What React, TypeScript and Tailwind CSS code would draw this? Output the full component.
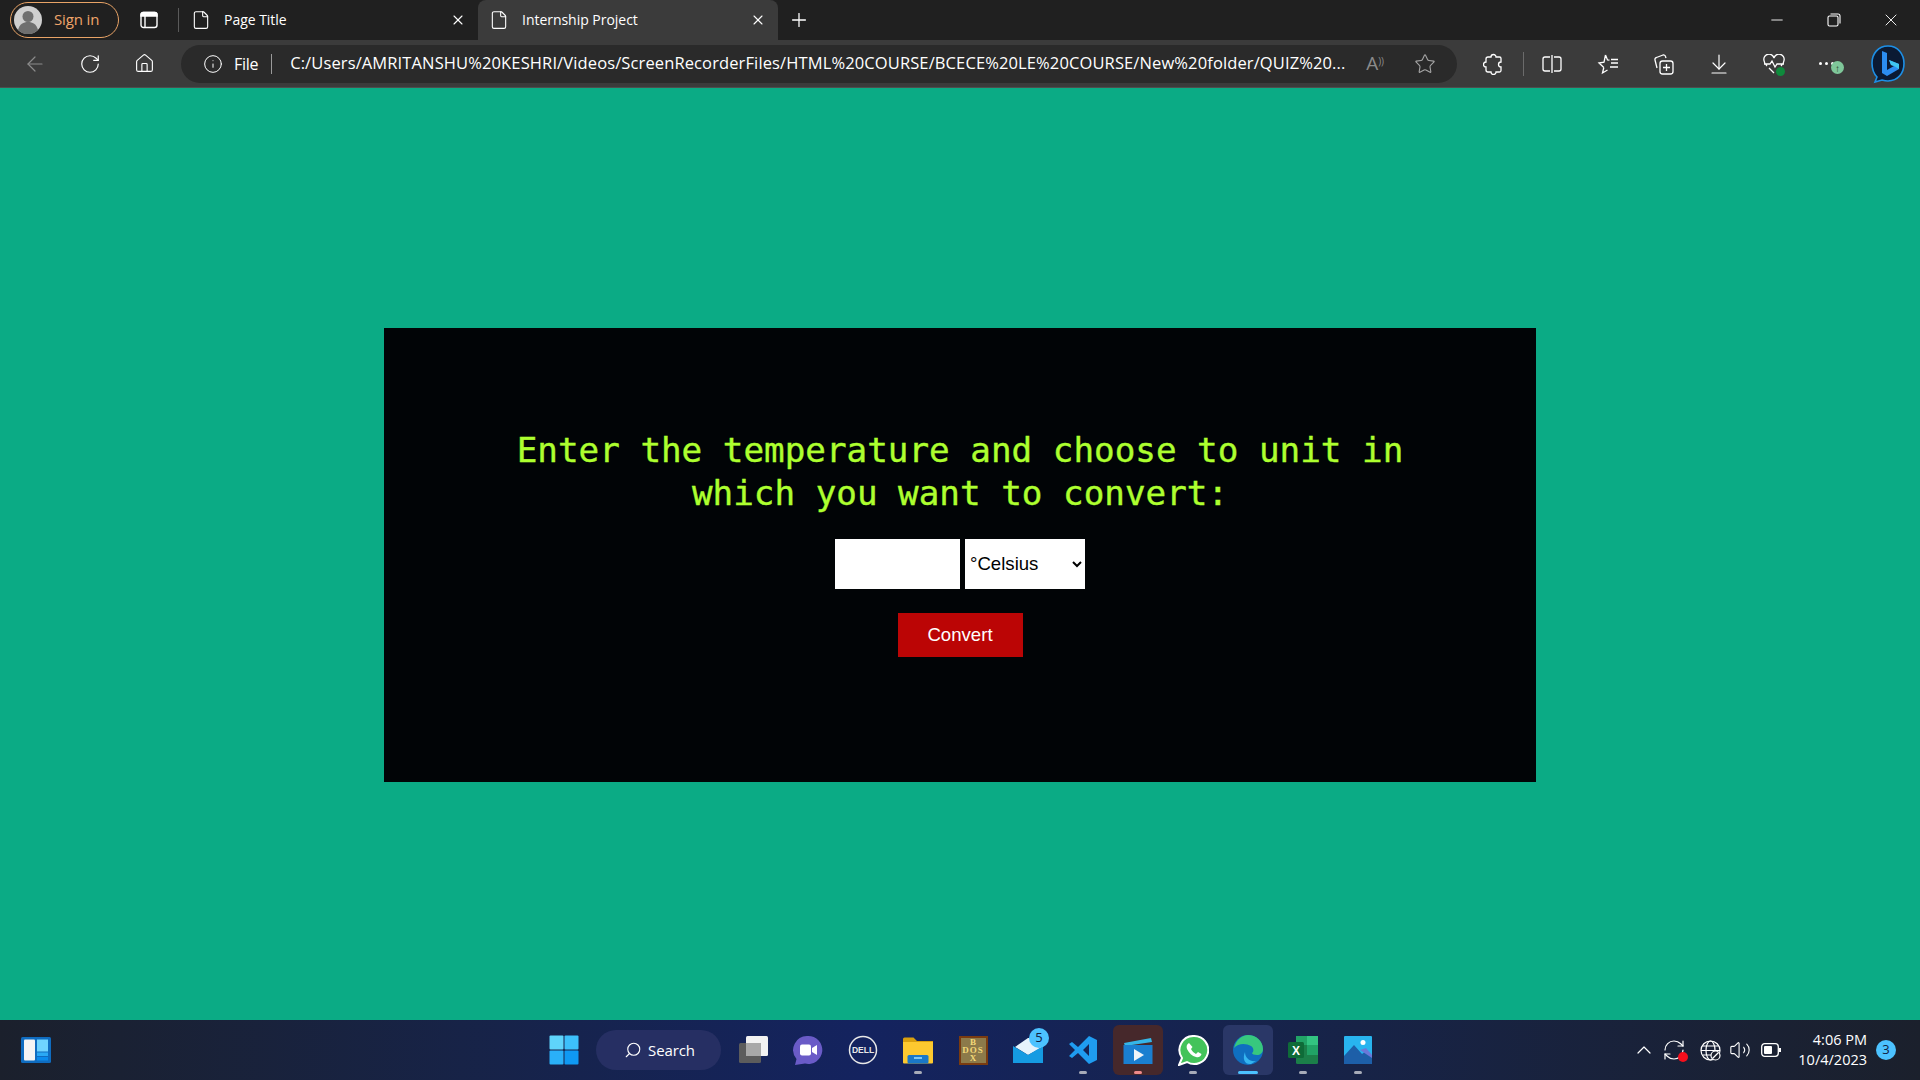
import type { ReactNode } from 'react'
import {
  ArrowDownToLine, ArrowLeft, ChevronUp, File, Home, Info, Minus, Plus, RefreshCw, RotateCw, Search, Star, Volume2, X,
} from 'lucide-react'

const UI_FONT = { fontFamily: '"Open Sans", "Noto Sans", sans-serif' }

function Slot({ w, children, className = '' }: { w: string; children: ReactNode; className?: string }) {
  return <div className={`${w} flex shrink-0 items-center justify-center ${className}`}>{children}</div>
}

function Tab({ title, active }: { title: string; active?: boolean }) {
  return (
    <div className={`flex h-10 items-center pr-[12px] ${active ? 'w-[300px] rounded-t-lg bg-[#3b3b3b] pl-[11px]' : 'w-[297px] pl-[10px]'}`}>
      <File size={20} strokeWidth={1.3} className="text-white" />
      <span className="ml-[13px] flex-1 pb-[2px] text-[14px] tracking-[-0.03px] text-white">{title}</span>
      <X size={16} strokeWidth={1.6} className="text-white" />
    </div>
  )
}

function Tray({ children, dot, active, tint }: { children: ReactNode; dot?: string; active?: boolean; tint?: string }) {
  return (
    <div className={`relative flex h-[50px] w-[50px] shrink-0 items-center justify-center rounded-md ${active ? 'bg-[#2a3767]' : ''} ${tint ?? ''}`}>
      {children}
      {dot && <span className={`absolute bottom-[1px] left-1/2 h-[3px] -translate-x-1/2 rounded-full ${dot}`} />}
    </div>
  )
}

function Avatar() {
  return (
    <svg width="28" height="28" viewBox="0 0 28 28">
      <circle cx="14" cy="14" r="14" fill="#cfcfcf" />
      <circle cx="14" cy="10.5" r="5.5" fill="#6f6f6f" />
      <path d="M4 24c1.5-6 5.500-8 10-8s8.500 2 10 8a14 14 0 0 1-20 0z" fill="#6f6f6f" />
    </svg>
  )
}

function BingLogo() {
  return (
    <svg width="36" height="40" viewBox="0 0 36 40" fill="none">
      <path d="M18 2C8 2 2 10 2 19c0 6 2 11 5 14l-2 5 7-2c2 .6 4 1 6 1 10 0 16-8 16-17.500S28 2 18 2z" fill="#0b1a33" stroke="#1d8fe6" strokeWidth="1.600" />
      <path d="M12 7l5 2v17l7-4-3-1-2-5 10 4v5l-12 7-5-3z" fill="#2c8df0" />
      <path d="M19 16l10 4v5l-5-3-3-1z" fill="#3fc6f0" />
    </svg>
  )
}

export default function App() {
  return (
    <div className="flex h-[1080px] w-[1920px] flex-col overflow-hidden bg-[#0bab85]" style={UI_FONT}>
      {/* tab strip */}
      <div className="flex h-10 shrink-0 items-center bg-[#202020]">
        <div className="ml-[10px] flex h-[36px] w-[109px] items-center rounded-full border border-[#e8a366] pl-[3px]">
          <Avatar />
          <span className="ml-[12px] pb-[2px] text-[15px] tracking-[-0.15px] text-[#f0a56a]">Sign in</span>
        </div>
        <svg className="ml-[21px]" width="18" height="18" viewBox="0 0 18 18" fill="none" stroke="white" strokeWidth="1.400">
          <rect x="1" y="1.500" width="16" height="15" rx="2.500" />
          <path d="M1 5h16v-1.500a2 2 0 0 0-2-2H3a2 2 0 0 0-2 2z" fill="white" />
          <path d="M5 5v11" />
        </svg>
        <div className="ml-[20px] mr-[2px] h-[24px] w-px bg-[#5a5a5a]" />
        <Tab title="Page Title" />
        <Tab title="Internship Project" active />
        <Plus size={22} strokeWidth={1.4} className="ml-[10px] text-white" />
        <div className="ml-auto mr-[1px] flex items-center">
          <Slot w="w-[57px]"><Minus size={18} strokeWidth={1.2} className="text-white" /></Slot>
          <Slot w="w-[57px]">
            <svg width="14" height="14" viewBox="0 0 14 14" fill="none" stroke="white" strokeWidth="1.100">
              <rect x="1" y="3" width="10" height="10" rx="1.500" />
              <path d="M3.500 1h7.500a2 2 0 0 1 2 2v7.500" />
            </svg>
          </Slot>
          <Slot w="w-[57px]"><X size={20} strokeWidth={1.1} className="text-white" /></Slot>
        </div>
      </div>

      {/* toolbar */}
      <div className="flex h-12 shrink-0 items-center border-b border-[#4e4e4e] bg-[#3b3b3b] pl-[7px] text-white">
        <Slot w="w-[55px]"><ArrowLeft size={24} strokeWidth={1.2} className="text-[#8b8b8b]" /></Slot>
        <Slot w="w-[55px]"><RotateCw size={22} strokeWidth={1.3} /></Slot>
        <Slot w="w-[55px]"><Home size={21} strokeWidth={1.3} /></Slot>
        <div className="ml-[9px] flex h-[38px] w-[1276px] items-center rounded-full bg-[#2a2a2a] pl-[22px]">
          <Info size={20} strokeWidth={1.200} />
          <span className="ml-[11px] text-[16px] tracking-[-0.3px]">File</span>
          <div className="ml-[13px] mr-[18px] h-[20px] w-px bg-[#9a9a9a]" />
          <span className="w-[1072px] shrink-0 truncate text-[16.5px] tracking-[0.12px]">
            C:/Users/AMRITANSHU%20KESHRI/Videos/ScreenRecorderFiles/HTML%20COURSE/BCECE%20LE%20COURSE/New%20folder/QUIZ%20...
          </span>
          <span className="ml-[4px] text-[19px] leading-none text-[#8b8b8b]">A<sup className="text-[10px]">))</sup></span>
          <Star size={22} strokeWidth={1.200} className="ml-[30px] shrink-0 text-[#a5a5a5]" />
        </div>
        <Slot w="w-[66px]" className="pl-[6px]">
          <svg width="20" height="22" viewBox="0 0 20 22" fill="none" stroke="white" strokeWidth="1.300">
            <path d="M8 4a2.500 2.500 0 0 1 5 0h3.500a1.500 1.500 0 0 1 1.500 1.500V9a2.500 2.500 0 0 0 0 5v3.500a1.500 1.500 0 0 1-1.500 1.500H13a2.500 2.500 0 0 1-5 0H5a2 2 0 0 1-2-2v-3a2.500 2.500 0 0 1 0-5V6a2 2 0 0 1 2-2z" />
          </svg>
        </Slot>
        <div className="h-[24px] w-px bg-[#6b6b6b]" />
        <Slot w="w-[56px]">
          <svg width="20" height="20" viewBox="0 0 20 20" fill="none" stroke="white" strokeWidth="1.300">
            <path d="M8 3H3a2 2 0 0 0-2 2v10a2 2 0 0 0 2 2h5M12 3h5a2 2 0 0 1 2 2v10a2 2 0 0 1-2 2h-5M10 1v18" />
          </svg>
        </Slot>
        <Slot w="w-[56px]">
          <svg width="22" height="22" viewBox="0 0 22 22" fill="none" stroke="white" strokeWidth="1.300">
            <path d="M8.500 2l2 5 2 .2M6.800 14.500L5.500 20l5-3M6.800 14.500L2 10l5-.8L8.500 2M14 10h7M13 14h8M14 6.500h7" />
          </svg>
        </Slot>
        <Slot w="w-[55px]">
          <svg width="22" height="22" viewBox="0 0 22 22" fill="none" stroke="white" strokeWidth="1.300">
            <path d="M4 15l-2-8a2 2 0 0 1 1.500-2.500L10 2a2 2 0 0 1 2.500 1.500L13 5" />
            <rect x="7" y="8" width="13" height="13" rx="2.500" />
            <path d="M13.500 11v7M10 14.500h7" />
          </svg>
        </Slot>
        <Slot w="w-[55px]"><ArrowDownToLine size={24} strokeWidth={1.200} /></Slot>
        <Slot w="w-[56px]">
          <span className="relative flex">
            <svg width="22" height="20" viewBox="0 0 22 20" fill="none" stroke="white" strokeWidth="1.300">
              <path d="M4 12C2 10 1 8.500 1 6.500A5 5 0 0 1 11 4a5 5 0 0 1 10 2.500c0 2-1 3.500-3 5.500M1 10h6l2-3 3 6 2-3h7M6 14l5 5" />
            </svg>
            <span className="absolute -bottom-[2px] right-0 h-[9px] w-[9px] rounded-full bg-[#0f8a3c]" />
          </span>
        </Slot>
        <Slot w="w-[56px]">
          <span className="relative flex w-[22px] justify-start gap-[3px]">
            <span className="h-[3px] w-[3px] rounded-full bg-white" />
            <span className="h-[3px] w-[3px] rounded-full bg-white" />
            <span className="h-[3px] w-[3px] rounded-full bg-white" />
            <span className="absolute -right-[3px] -top-[1px] flex h-[13px] w-[13px] items-center justify-center rounded-full bg-[#7fc79a] text-[10px] font-bold leading-none text-[#1c3b27]">↑</span>
          </span>
        </Slot>
        <Slot w="w-[60px]"><BingLogo /></Slot>
      </div>

      {/* page */}
      <div className="flex flex-1 items-center justify-center pt-[2px]">
        <div className="flex h-[454px] w-[1152px] flex-col items-center bg-[#010406] pt-[101px]">
          <h1
            className="w-[900px] text-center text-[34.26px] font-normal leading-[43px] text-[#adff2f] [-webkit-text-stroke:0.4px_#adff2f]"
            style={{ fontFamily: '"DejaVu Sans Mono", monospace' }}
          >
            Enter the temperature and choose to unit in which you want to convert:
          </h1>
          <div className="mt-[24px] flex gap-[5px]" style={{ fontFamily: '"Liberation Sans", sans-serif' }}>
            <input className="h-[50px] w-[125px] bg-white text-[18.6px] text-black outline-none" />
            <select defaultValue="c" className="h-[50px] w-[120px] bg-white pb-[2px] pl-[1px] text-[18.6px] text-black outline-none">
              <option value="c">°Celsius</option>
              <option value="f">°Fahrenheit</option>
              <option value="k">°Kelvin</option>
            </select>
          </div>
          <button
            className="mt-[24px] h-[44px] w-[125px] bg-[#bb0505] text-[18.6px] text-white"
            style={{ fontFamily: '"Liberation Sans", sans-serif' }}
          >
            Convert
          </button>
        </div>
      </div>

      {/* taskbar */}
      <div className="flex h-[60px] shrink-0 items-center bg-gradient-to-r from-[#1b202c] via-[#14235f] via-45% to-[#1b202c] pl-[21px] pr-[24px]">
        <svg width="30" height="26" viewBox="0 0 30 26">
          <rect width="30" height="26" rx="1.500" fill="#0f6cc0" />
          <rect x="3" y="2.500" width="11" height="21" rx="1" fill="#f4f4f4" />
          <rect x="16" y="2.500" width="11" height="12" fill="#6fd3ff" />
          <rect x="16" y="15.500" width="11" height="3.500" fill="#2aa9f5" />
          <rect x="16" y="20" width="11" height="3.500" fill="#0a8aec" />
        </svg>

        <div className="ml-[498px] flex items-center">
          <svg width="30" height="30" viewBox="0 0 30 30">
            <rect x="0.500" y="0.500" width="14" height="14" rx="1" fill="#5fd4fb" />
            <rect x="15.500" y="0.500" width="14" height="14" rx="1" fill="#3dc0fb" />
            <rect x="0.500" y="15.500" width="14" height="14" rx="1" fill="#2ab0f8" />
            <rect x="15.500" y="15.500" width="14" height="14" rx="1" fill="#0f99f3" />
          </svg>
          <div className="ml-[17px] flex h-[40px] w-[125px] items-center rounded-full bg-[#262f63] pl-[28px] text-white">
            <Search size={18} strokeWidth={1.500} className="-scale-x-100" />
            <span className="ml-[6px] text-[15px] tracking-[-0.1px]">Search</span>
          </div>
          <div className="ml-[7px] flex gap-[5px]">
            <Tray>
              <svg width="30" height="30" viewBox="0 0 30 30">
                <rect x="1" y="8" width="22" height="20" rx="1.500" fill="#5c5c5c" />
                <rect x="8" y="1" width="22" height="20" rx="1.500" fill="#f2f2f2" />
                <rect x="8" y="8" width="15" height="13" fill="#a8a8a8" />
              </svg>
            </Tray>
            <Tray>
              <svg width="30" height="30" viewBox="0 0 30 30">
                <path d="M15 1a14 14 0 1 1-3 27.600L2 30l1.500-6A14 14 0 0 1 15 1z" fill="#6a5bc7" />
                <rect x="7" y="9.500" width="11" height="11" rx="2" fill="white" />
                <path d="M19 13l5-3v10l-5-3z" fill="white" />
              </svg>
            </Tray>
            <Tray>
              <svg width="30" height="30" viewBox="0 0 30 30" fill="none">
                <circle cx="15" cy="15" r="13.500" stroke="#e8e8e8" strokeWidth="1.500" />
                <text x="15" y="18" textAnchor="middle" fontSize="8.500" fontWeight="700" fill="#e8e8e8" fontFamily="Liberation Sans">DELL</text>
              </svg>
            </Tray>
            <Tray dot="w-[8px] bg-[#a7abb8]">
              <svg width="30" height="28" viewBox="0 0 30 28">
                <path d="M0 3a1.500 1.500 0 0 1 1.500-1.500h9L14 5h16v4H0z" fill="#d9a00e" />
                <path d="M0 6h30v20.500a1 1 0 0 1-1 1H1a1 1 0 0 1-1-1z" fill="#fdc92f" />
                <rect x="4.500" y="19" width="21" height="8.500" rx="1.500" fill="#1a78c8" />
                <rect x="11" y="21" width="8" height="2" fill="#7cc7f5" />
              </svg>
            </Tray>
            <Tray>
              <div className="flex h-[29px] w-[29px] flex-col items-center justify-center border-2 border-[#7a3b10] bg-[#8c7a4a] text-[9px] font-bold leading-[8px] text-[#f2d877]" style={{ fontFamily: '"Liberation Serif", serif' }}>
                <span>B</span>
                <span className="tracking-[1px]">DOS</span>
                <span>X</span>
              </div>
            </Tray>
            <Tray>
              <svg width="30" height="26" viewBox="0 0 30 26">
                <path d="M2 10L15 1h13l2 9-15 8z" fill="#e6f3fb" />
                <path d="M0 9l15 9 15-9v17H0z" fill="#159be2" />
              </svg>
              <span className="absolute right-[4px] top-[3px] flex h-[20px] w-[20px] items-center justify-center rounded-full bg-[#4cc2ff] text-[13px] text-[#10203f]">5</span>
            </Tray>
            <Tray dot="w-[8px] bg-[#a7abb8]">
              <svg width="30" height="30" viewBox="0 0 30 30">
                <path d="M21 1l8 4v20l-8 4-11-11-6 5-3-2 6-6-6-6 3-2 6 5zm0 8l-6 6 6 6z" fill="#1f9cf0" />
              </svg>
            </Tray>
            <Tray dot="w-[8px] bg-[#f08a8a]" tint="bg-[#46282b]">
              <svg width="30" height="30" viewBox="0 0 30 30">
                <path d="M1 8L28 3l1 4L2 11z" fill="#35b6e8" />
                <rect x="0.500" y="10" width="29" height="19" fill="#1a7fd0" />
                <path d="M11 14l10 6-10 6z" fill="#eef4f8" />
              </svg>
            </Tray>
            <Tray dot="w-[8px] bg-[#a7abb8]">
              <svg width="31" height="31" viewBox="0 0 31 31">
                <path d="M16 1a14 14 0 1 1-7 26L1 30l3-7A14 14 0 0 1 16 1z" fill="#43c35a" stroke="white" strokeWidth="2" />
                <path d="M11 8c-2 1-3 3-2 6 2 4 5 7 9 8 3 1 5-1 5.500-3l-3.500-2-2 2c-2-1-4-3-5-5l1.500-2z" fill="white" />
              </svg>
            </Tray>
            <Tray active dot="w-[20px] bg-[#4cc2ff]">
              <svg width="30" height="30" viewBox="0 0 30 30">
                <circle cx="15" cy="15" r="15" fill="#0f6fc0" />
                <path d="M1 13C3 5 9 0 15 0c8 0 15 6 15 14 0 4-3 6-6 6-3 0-5-1-5-2 2-1 2-5-1-7-5-3-13-3-17 2z" fill="#37c87e" />
                <path d="M12 17c0 6 5 10 11 9l-5 3c-6 1-9-5-6-12z" fill="#35b5f0" />
              </svg>
            </Tray>
            <Tray dot="w-[8px] bg-[#a7abb8]">
              <svg width="30" height="28" viewBox="0 0 30 28">
                <rect x="8" y="0" width="22" height="28" rx="1.500" fill="#1b7f49" />
                <rect x="19" y="0" width="11" height="9" fill="#33c481" />
                <rect x="8" y="0" width="11" height="9" fill="#21a366" />
                <rect x="19" y="9" width="11" height="10" fill="#21a366" />
                <rect x="0" y="6" width="16" height="16" rx="1.500" fill="#0e6b38" />
                <text x="8" y="18.500" textAnchor="middle" fontSize="12" fontWeight="700" fill="white" fontFamily="Liberation Sans">X</text>
              </svg>
            </Tray>
            <Tray dot="w-[8px] bg-[#a7abb8]">
              <svg width="28" height="28" viewBox="0 0 28 28">
                <rect width="28" height="28" rx="1" fill="#28b4ef" />
                <circle cx="19" cy="6.500" r="2.500" fill="white" />
                <path d="M0 20l10-11 8 9 4-3 6 5v8H0z" fill="#1d5fa8" />
                <path d="M16 14l6-2 6 7v3z" fill="#6a78d8" />
              </svg>
            </Tray>
          </div>
        </div>

        <div className="ml-auto flex items-center text-white">
          <ChevronUp size={24} strokeWidth={1.200} />
          <span className="relative ml-[6px] flex">
            <RefreshCw size={24} strokeWidth={1.200} />
            <span className="absolute bottom-0 right-[-2px] h-[10px] w-[10px] rounded-full bg-[#f50f1c]" />
          </span>
          <svg className="ml-[14px]" width="21" height="21" viewBox="0 0 21 21" fill="none" stroke="white" strokeWidth="1.200">
            <circle cx="10.500" cy="10.500" r="9.500" />
            <ellipse cx="10.500" cy="10.500" rx="4.500" ry="9.500" />
            <path d="M1 10.500h19M2.500 6h16M2.500 15h16" />
            <circle cx="15.500" cy="15.500" r="4.500" fill="#1b202c" />
            <path d="M12.500 18.500l6-6" />
          </svg>
          <Volume2 size={22} strokeWidth={1.200} className="ml-[8px]" />
          <svg className="ml-[10px]" width="20" height="14" viewBox="0 0 20 14" fill="none">
            <rect x="0.700" y="0.700" width="16.600" height="12.600" rx="3" stroke="white" strokeWidth="1.300" />
            <rect x="3" y="3" width="8" height="8" rx="1" fill="white" />
            <rect x="18" y="5" width="2" height="4" fill="white" />
          </svg>
          <div className="ml-[17px] text-right text-[14.5px] leading-[20px]">
            <div>4:06 PM</div>
            <div>10/4/2023</div>
          </div>
          <span className="ml-[9px] flex h-[20px] w-[20px] items-center justify-center rounded-full bg-[#4cc2ff] text-[13px] text-[#10203f]">3</span>
        </div>
      </div>
    </div>
  )
}
